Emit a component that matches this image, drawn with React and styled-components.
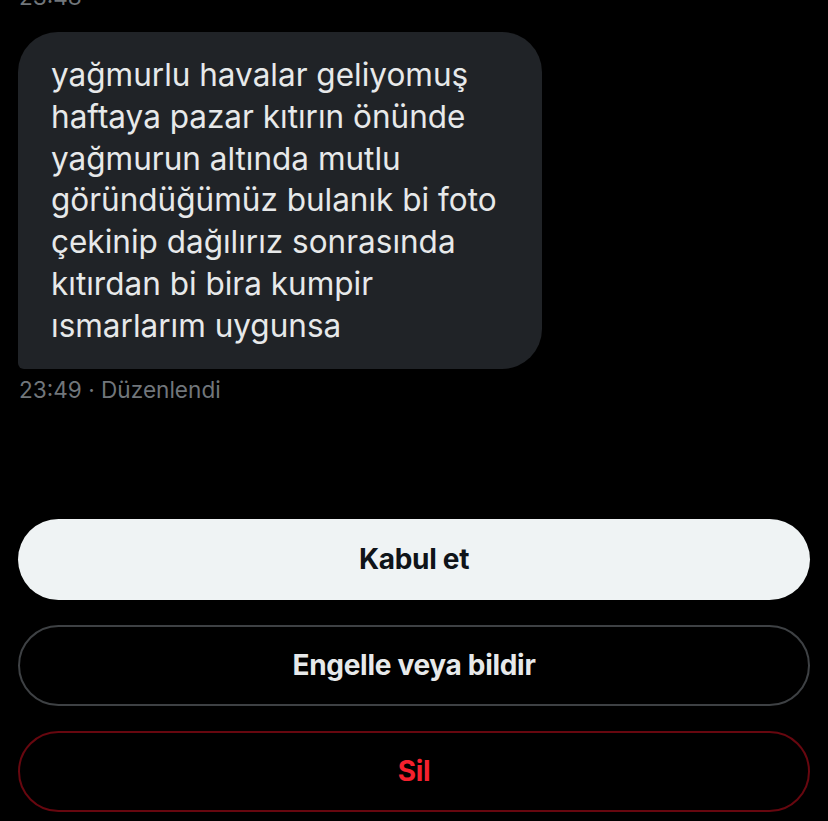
import React from 'react'
import styled, { createGlobalStyle } from 'styled-components'

const Global = createGlobalStyle`
  html, body { margin: 0; padding: 0; background: #000; }
  body { font-family: "Inter", "Noto Sans", sans-serif; -webkit-font-smoothing: antialiased; }
`

const Page = styled.div`
  width: 828px;
  height: 821px;
  overflow: hidden;
  background: #000;
  padding: 0 18px;
  box-sizing: border-box;
  display: flex;
  flex-direction: column;
`

const Stamp = styled.div`
  color: #71767b;
  font-size: 22.6px;
  line-height: 26px;
  margin-top: ${p => p.$top || '0px'};
  padding-left: 1px;
`

const Bubble = styled.div`
  width: 524px;
  box-sizing: border-box;
  background: #202327;
  border-radius: 40px 40px 40px 6px;
  padding: 22px 20px 22px 33px;
  color: #e7e9ea;
  font-size: 31.5px;
  line-height: 41.8px;
  margin-top: 22px;
  margin-bottom: 8px;
`

const Actions = styled.div`
  display: flex;
  flex-direction: column;
  gap: 25px;
  margin-top: 116px;
`

const Button = styled.button`
  height: 81px;
  width: 100%;
  border-radius: 41px;
  font-family: "Inter", "Noto Sans", sans-serif;
  font-weight: 700;
  font-size: 28px;
  letter-spacing: -0.3px;
  cursor: pointer;
  background: ${p => (p.$variant === 'primary' ? '#eff3f4' : '#000')};
  color: ${p => (p.$variant === 'primary' ? '#0f1419' : p.$variant === 'danger' ? '#f4212e' : '#e7e9ea')};
  border: ${p => (p.$variant === 'primary' ? 'none' : p.$variant === 'danger' ? '2px solid #67070f' : '2px solid #3e4144')};
`

export default function App() {
  return (
    <>
      <Global />
      <Page>
        <Stamp $top="-16px">23:48</Stamp>
        <Bubble>
          yağmurlu havalar geliyomuş haftaya pazar kıtırın önünde yağmurun altında mutlu göründüğümüz bulanık bi foto çekinip dağılırız sonrasında kıtırdan bi bira kumpir ısmarlarım uygunsa
        </Bubble>
        <Stamp>23:49 · Düzenlendi</Stamp>
        <Actions>
          <Button $variant="primary">Kabul et</Button>
          <Button>Engelle veya bildir</Button>
          <Button $variant="danger">Sil</Button>
        </Actions>
      </Page>
    </>
  )
}
